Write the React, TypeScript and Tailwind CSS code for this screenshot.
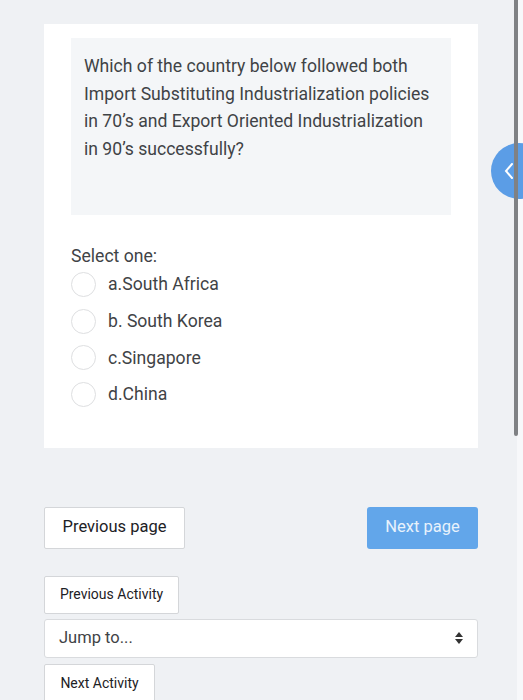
import React from 'react';

const options = ['a.South Africa', 'b. South Korea', 'c.Singapore', 'd.China'];

export default function App() {
  return (
    <div
      className="relative h-[700px] w-[523px] overflow-hidden bg-[#eff1f4] text-[#373a3c]"
      style={{ fontFamily: 'Roboto, "Noto Sans", sans-serif' }}
    >
      <div className="w-[434px] ml-[44px] pt-[24px]">
        {/* Question card */}
        <div className="bg-white px-[27px] pt-[14px] pb-[35px]">
          <div className="h-[177px] bg-[#f4f6f8] px-[13px] pt-[15px] text-[17.6px] leading-[27.5px] text-[#3f4346]">
            Which of the country below followed both Import Substituting Industrialization policies in 70’s and Export
            Oriented Industrialization in 90’s successfully?
          </div>
          <div className="mt-[31px] text-[17.6px] leading-[20px] text-[#3f4346]">Select one:</div>
          <div className="flex flex-col">
            {options.map((o) => (
              <label key={o} className="flex h-[36.7px] items-center gap-[12px] text-[17.6px] text-[#3f4346]">
                <span className="h-[25px] w-[25px] rounded-full border border-[#dedfe1] bg-white" />
                {o}
              </label>
            ))}
          </div>
        </div>

        {/* Page nav */}
        <div className="mt-[59px] flex items-center justify-between">
          <button className="h-[42px] w-[141px] rounded-[2px] border border-[#d4d6d9] bg-white text-[16.5px] text-[#1d2125]">
            Previous page
          </button>
          <button className="h-[42px] w-[111px] rounded-[3px] bg-[#62a6ea] text-[16.5px] text-[#e8f2fc]">
            Next page
          </button>
        </div>

        {/* Activity nav */}
        <button className="mt-[27px] h-[38px] w-[135px] rounded-[2px] border border-[#d4d6d9] bg-white text-[14px] text-[#1d2125]">
          Previous Activity
        </button>
        <div className="mt-[5px] flex h-[39px] items-center justify-between rounded-[3px] border border-[#d9dbde] bg-white pl-[14px] pr-[13px] text-[16.5px] text-[#3f4346]">
          <span>Jump to...</span>
          <svg width="10" height="14" viewBox="0 0 10 14" fill="#333">
            <path d="M5 1 L9 6 H1 Z" />
            <path d="M5 13 L9 8 H1 Z" />
          </svg>
        </div>
        <button className="mt-[6px] h-[40px] w-[111px] rounded-[2px] border border-[#d4d6d9] bg-white text-[14px] text-[#1d2125]">
          Next Activity
        </button>
      </div>

      {/* Right strip */}
      <div className="absolute right-0 top-0 h-full w-[6px] bg-[#f7f8fa]" />

      {/* Drawer toggle */}
      <div className="absolute left-[491px] top-[143px] flex h-[56px] w-[56px] items-center rounded-full bg-[#5b9de6] pl-[12px]">
        <svg width="12" height="18" viewBox="0 0 12 18" fill="none" stroke="white" strokeWidth="2" strokeLinecap="round">
          <path d="M9 2 L3 9 L9 16" />
        </svg>
      </div>

      {/* Scrollbar */}
      <div className="absolute left-[514px] top-0 h-[436px] w-[4px] rounded-b-full bg-[#7f8184]" />
    </div>
  );
}
